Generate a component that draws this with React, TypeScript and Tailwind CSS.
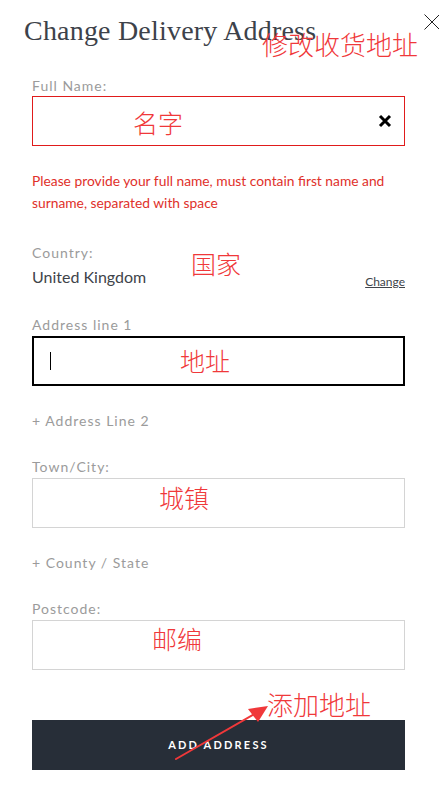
const lato = { fontFamily: 'Lato, "Open Sans", sans-serif' }

function Label({ children, className = '' }: { children: React.ReactNode; className?: string }) {
  return (
    <div className={`text-[14px] leading-4 tracking-[1px] text-[#9b9b9b] ${className}`}>{children}</div>
  )
}

function Note({ text, className }: { text: string; className: string }) {
  return (
    <span
      className={`absolute whitespace-nowrap text-[#f0383a] leading-none ${className}`}
      style={{ fontFamily: '"Noto Sans CJK SC", sans-serif', fontWeight: 300 }}
    >
      {text}
    </span>
  )
}

export default function App() {
  return (
    <div className="relative w-[439px] h-[787px] bg-white overflow-hidden" style={lato}>
      <div className="flex flex-col pl-8 pr-[34px]">
        <div className="-ml-2 pt-[13px] h-[70px]">
          <h1
            className="text-[28px] leading-9 text-[#3d424a] tracking-[0.2px]"
            style={{ fontFamily: '"Liberation Serif", serif' }}
          >
            Change Delivery Address
          </h1>
        </div>

        <Label className="mt-[8px]">Full Name:</Label>
        <div className="mt-[2px] h-[50px] border border-[#e01b1b] flex items-center justify-end pr-3">
          <svg width="14" height="14" viewBox="0 0 14 14">
            <path d="M2 2L12 12M12 2L2 12" stroke="#000" strokeWidth="3" />
          </svg>
        </div>

        <p className="mt-[24px] text-[13.8px] leading-[22px] text-[#e0302a]">
          Please provide your full name, must contain first name and surname, separated with space
        </p>

        <Label className="mt-[31px]">Country:</Label>
        <div className="mt-[6px] flex items-end justify-between">
          <span className="text-[16px] leading-5 text-[#40444a]">United Kingdom</span>
          <a className="text-[12px] leading-4 text-[#40444a] underline mb-[-3px]">Change</a>
        </div>

        <Label className="mt-[30px]">Address line 1</Label>
        <div className="mt-[3px] h-[50px] border-2 border-black flex items-center pl-4">
          <span className="block w-px h-[18px] bg-black" />
        </div>

        <Label className="mt-[27px]">+ Address Line 2</Label>

        <Label className="mt-[30px]">Town/City:</Label>
        <div className="mt-[3px] h-[50px] border border-[#d4d4d4]" />

        <Label className="mt-[27px]">+ County / State</Label>

        <Label className="mt-[30px]">Postcode:</Label>
        <div className="mt-[3px] h-[50px] border border-[#d4d4d4]" />

        <button className="mt-[50px] h-[50px] bg-[#272e38] text-white text-[11px] font-bold tracking-[2.2px]">
          ADD ADDRESS
        </button>
      </div>

      <button className="absolute top-[14px] left-[424px]">
        <svg width="16" height="16" viewBox="0 0 16 16">
          <path d="M0.5 0.5L15.5 15.5M15.5 0.5L0.5 15.5" stroke="#222" strokeWidth="1" />
        </svg>
      </button>

      <Note text="修改收货地址" className="left-[262px] top-[31px] text-[26px]" />
      <Note text="名字" className="left-[133px] top-[110px] text-[25px]" />
      <Note text="国家" className="left-[191px] top-[251px] text-[25px]" />
      <Note text="地址" className="left-[180px] top-[348px] text-[25px]" />
      <Note text="城镇" className="left-[159px] top-[485px] text-[25px]" />
      <Note text="邮编" className="left-[152px] top-[626px] text-[25px]" />
      <Note text="添加地址" className="left-[267px] top-[691px] text-[26px]" />

      <svg className="absolute left-[170px] top-[700px]" width="104" height="64" viewBox="0 0 104 64">
        <line x1="6" y1="59" x2="86" y2="13" stroke="#f0383a" strokeWidth="2" strokeLinecap="round" />
        <polygon points="98,6 78,9 88,22" fill="#f0383a" />
      </svg>
    </div>
  )
}
